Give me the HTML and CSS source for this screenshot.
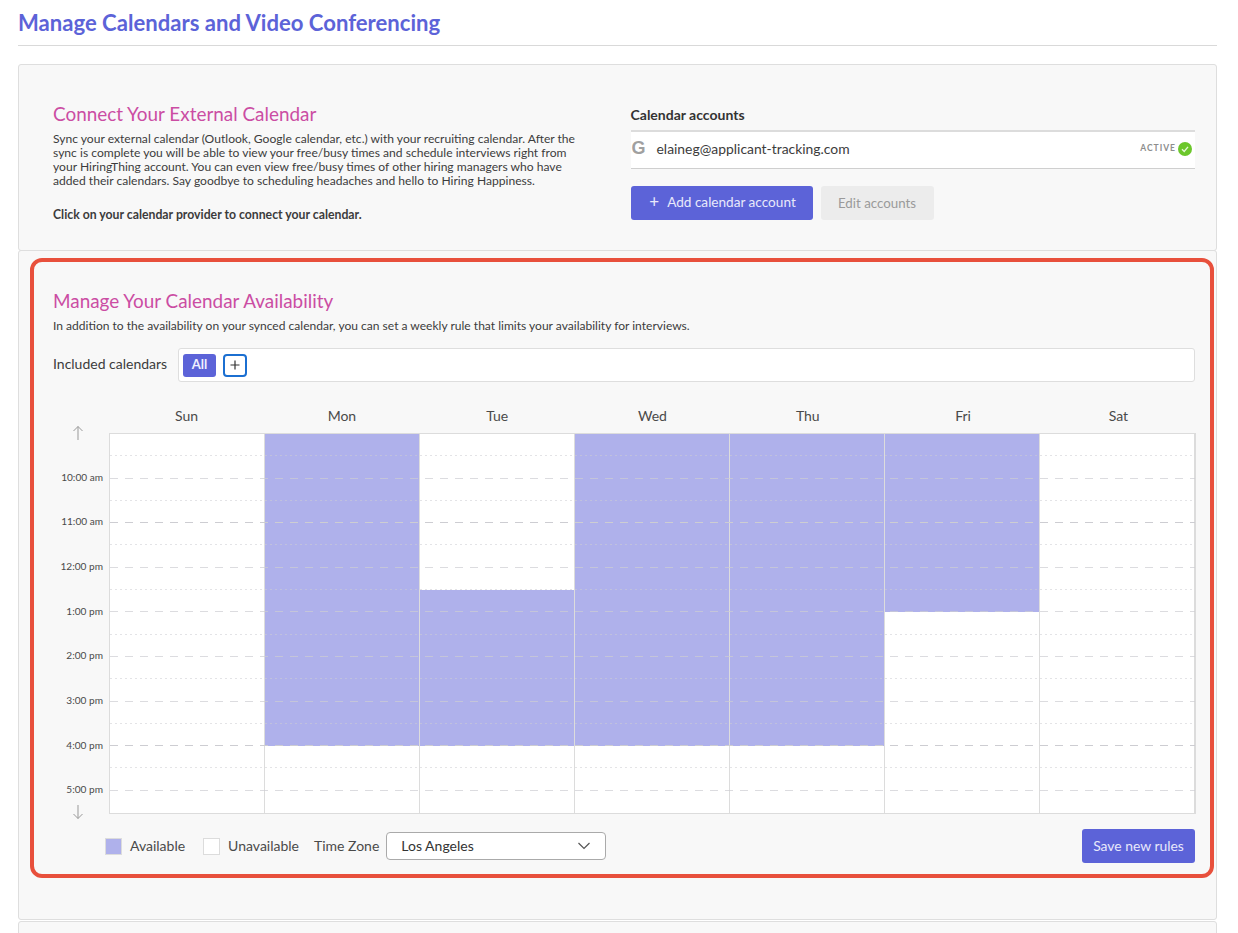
FILE: index.html
```html
<!DOCTYPE html>
<html lang="en">
<head>
<meta charset="utf-8">
<title>Manage Calendars and Video Conferencing</title>
<link rel="stylesheet" href="styles.css">
</head>
<body>
<main class="page">
  <h1 class="page-title">Manage Calendars and Video Conferencing</h1>

  <section class="card card-connect">
    <div class="connect-intro">
      <h2 class="section-title">Connect Your External Calendar</h2>
      <p class="copy">Sync your external calendar (Outlook, Google calendar, etc.) with your recruiting calendar. After the sync is complete you will be able to view your free/busy times and schedule interviews right from your HiringThing account. You can even view free/busy times of other hiring managers who have added their calendars. Say goodbye to scheduling headaches and hello to Hiring Happiness.</p>
      <p class="copy copy-strong">Click on your calendar provider to connect your calendar.</p>
    </div>
    <div class="accounts">
      <h3 class="accounts-title">Calendar accounts</h3>
      <div class="account-row">
        <span class="google-g">G</span>
        <span class="account-email">elaineg@applicant-tracking.com</span>
        <span class="status">ACTIVE</span>
        <svg class="status-icon" width="14" height="14" viewBox="0 0 14 14" aria-hidden="true"><circle cx="7" cy="7" r="7" fill="#6cc72b"/><path d="M4 7.3 6.2 9.4 10 4.9" fill="none" stroke="#e6f7d8" stroke-width="1.4"/></svg>
      </div>
      <div class="account-actions">
        <button class="btn btn-primary btn-add"><span class="btn-plus">+</span>Add calendar account</button>
        <button class="btn btn-muted">Edit accounts</button>
      </div>
    </div>
  </section>

  <section class="card card-availability">
    <h2 class="section-title">Manage Your Calendar Availability</h2>
    <p class="copy copy-one">In addition to the availability on your synced calendar, you can set a weekly rule that limits your availability for interviews.</p>

    <div class="included">
      <span class="label">Included calendars</span>
      <div class="tag-box">
        <span class="tag">All</span>
        <span class="tag-add"><svg width="12" height="12" viewBox="0 0 12 12" aria-hidden="true"><path d="M6 1.5v9M1.5 6h9" stroke="#333" stroke-width="1.2" fill="none"/></svg></span>
      </div>
    </div>

    <div class="days">
      <span>Sun</span><span>Mon</span><span>Tue</span><span>Wed</span><span>Thu</span><span>Fri</span><span>Sat</span>
    </div>

    <div class="schedule">
      <div class="axis">
        <svg class="arrow" width="12" height="16" viewBox="0 0 12 16" aria-hidden="true"><path d="M6 15V1.5M1.5 6 6 1.5 10.500 6" fill="none" stroke="#999" stroke-width="1"/></svg>
        <div class="hours">
          <span>10:00 am</span><span>11:00 am</span><span>12:00 pm</span><span>1:00 pm</span><span>2:00 pm</span><span>3:00 pm</span><span>4:00 pm</span><span>5:00 pm</span>
        </div>
        <svg class="arrow arrow-down" width="12" height="16" viewBox="0 0 12 16" aria-hidden="true"><path d="M6 1v13.500M1.500 10 6 14.500 10.500 10" fill="none" stroke="#999" stroke-width="1"/></svg>
      </div>
      <div class="grid">
        <div class="day"></div>
        <div class="day"><div class="avail" style="height:312px"></div></div>
        <div class="day"><div class="avail" style="margin-top:156px;height:156px"></div></div>
        <div class="day"><div class="avail" style="height:312px"></div></div>
        <div class="day"><div class="avail" style="height:312px"></div></div>
        <div class="day"><div class="avail" style="height:178px"></div></div>
        <div class="day"></div>
        <div class="lines">
          <i class="dot"></i><i class="dash"></i><i class="dot"></i><i class="strong"></i><i class="dot"></i><i class="dash"></i><i class="dot"></i><i class="dash"></i><i class="dot"></i><i class="dash"></i><i class="dot"></i><i class="dash"></i><i class="dot"></i><i class="strong"></i><i class="dot"></i><i class="dash"></i><i></i>
        </div>
      </div>
    </div>

    <div class="legend">
      <span class="swatch swatch-on"></span><span class="legend-text">Available</span>
      <span class="swatch swatch-off"></span><span class="legend-text">Unavailable</span>
      <span class="legend-text tz-label">Time Zone</span>
      <div class="select">
        <span>Los Angeles</span>
        <svg width="14" height="8" viewBox="0 0 14 8" aria-hidden="true"><path d="M1.500 1 7 6.500 12.500 1" fill="none" stroke="#555" stroke-width="1.200"/></svg>
      </div>
      <button class="btn btn-primary btn-save">Save new rules</button>
    </div>
  </section>

  <section class="card card-next"></section>
  <div class="highlight"></div>
</main>
</body>
</html>
```

FILE: styles.css
```css
* { box-sizing: border-box; }
html, body { margin: 0; height: 933px; overflow: hidden; background: #fff; }
body { font-family: "Lato", "Liberation Sans", sans-serif; color: #3c3c3c; }
.page { position: relative; height: 933px; padding: 0 21px 0 18px; overflow: hidden; }

.page-title {
  margin: 0 0 18px;
  height: 46px;
  padding-top: 10px;
  font-size: 22.100px;
  line-height: 26px;
  font-weight: 700;
  color: #5c63d8;
  border-bottom: 1px solid #d9d9d9;
}

.card { background: #f8f8f8; border: 1px solid #dedede; border-radius: 3px; }
.card-connect { height: 187px; display: flex; padding: 0 21px 0 34px; }
.connect-intro { width: 525px; padding-top: 37px; }
.section-title { margin: 0; font-size: 18.900px; line-height: 24px; font-weight: 400; color: #cb4da3; }
.copy { margin: 0; font-size: 12.100px; line-height: 14px; color: #3c3c3c; }
.connect-intro .copy { margin-top: 6px; }
.connect-intro .copy-strong { margin-top: 20px; font-size: 12.250px; font-weight: 700; }

.accounts { width: 565px; margin-left: 53px; padding-top: 42px; }
.accounts-title { margin: 0 0 7px; font-size: 14px; line-height: 16px; font-weight: 700; color: #333; }
.account-row {
  display: flex; align-items: center; height: 39px; padding: 0 3px 4px 1px;
  background: #fff; border-top: 2px solid #dcdcdc; border-bottom: 1px solid #cfcfcf;
}
.google-g { width: 25px; font-family: "Liberation Sans", sans-serif; font-size: 18px; font-weight: 700; color: #a0a0a0; }
.account-email { flex: 1; font-size: 13.900px; color: #3c3c3c; }
.status { font-size: 8.500px; font-weight: 700; letter-spacing: 1px; color: #8d8d8d; margin-right: 2px; }
.status-icon { margin-top: 2px; }
.account-actions { display: flex; gap: 8px; margin-top: 17px; }

.btn { border: 0; border-radius: 3px; font-family: inherit; font-size: 13.900px; height: 34px; padding: 0 0 1px; }
.btn-primary { background: #5c63d8; color: #e8e9fb; }
.btn-add { width: 182px; font-size: 13.600px; padding: 0 0 3px 2px; }
.btn-plus { font-size: 17px; font-weight: 400; margin-right: 8px; vertical-align: -1px; }
.btn-muted { width: 113px; background: #ececec; color: #9a9a9a; font-size: 13.300px; }

.card-availability { height: 670px; margin-top: -1px; padding: 38px 21px 0 34px; }
.copy-one { margin-top: 6px; font-size: 12.050px; }
.included { display: flex; align-items: center; gap: 10px; margin-top: 15px; }
.label { font-size: 14px; color: #3c3c3c; width: 115px; white-space: nowrap; padding-bottom: 3px; }
.tag-box {
  flex: 1; display: flex; align-items: center; gap: 7px; height: 34px; padding: 0 4px;
  background: #fff; border: 1px solid #dedede; border-radius: 3px;
}
.tag { width: 33px; height: 23px; background: #5c63d8; color: #f0f0ff; font-size: 13px; font-weight: 700; line-height: 21px; text-align: center; border-radius: 3px; }
.tag-add { width: 24px; height: 23px; display: flex; align-items: center; justify-content: center; background: #fff; border: 2px solid #1b6fd1; border-radius: 4px; }

.days { display: grid; grid-template-columns: repeat(7, 1fr); margin: 25px -1px 0 56px; height: 18px; font-size: 14px; line-height: 18px; text-align: center; color: #4a4a4a; }

.schedule { display: flex; margin-top: 8px; margin-right: -1px; }
.axis { flex: none; width: 56px; height: 381px; margin-top: -8px; display: flex; flex-direction: column; }
.arrow { display: block; margin-left: 19px; flex: none; }
.arrow-down { margin-top: -8px; }
.hours { flex: none; margin-top: 14px; height: 357px; display: flex; flex-direction: column; }
.hours span { flex: 1; display: flex; align-items: center; justify-content: flex-end; padding: 0 6px 1px 0; font-size: 10.100px; color: #4a4a4a; }

.grid { position: relative; flex: 1; height: 381px; display: grid; grid-template-columns: repeat(7, 1fr); background: #fff; border: 1px solid #dcdcdc; }
.day { border-right: 1px solid #dcdcdc; }
.day:last-of-type { border-right: 0; }
.avail { background: #afb1eb; }
.lines { position: absolute; inset: 0; display: flex; flex-direction: column; }
.lines i { flex: 1; display: block; background-repeat: no-repeat; background-position: left bottom; background-size: 100% 1px; }
.lines .dot { background-image: repeating-linear-gradient(90deg, rgba(205,205,210,.55) 0 2px, transparent 2px 5px); }
.lines .dash { background-image: repeating-linear-gradient(90deg, rgba(205,205,210,.7) 0 8px, transparent 8px 15px); }
.lines .strong { background-image: repeating-linear-gradient(90deg, rgba(205,205,210,1) 0 8px, transparent 8px 15px); }

.legend { display: flex; align-items: center; margin-top: 15px; height: 34px; padding-left: 52px; }
.swatch { width: 17px; height: 17px; flex: none; margin-top: 1px; border: 1px solid #dcdcdc; }
.swatch-on { background: #afb1eb; }
.swatch-off { background: #fff; margin-left: 18px; }
.legend-text { font-size: 14px; color: #4a4a4a; margin-left: 8px; padding-bottom: 1px; }
.tz-label { margin-left: 15px; }
.select {
  width: 220px; height: 28px; margin-left: 7px; display: flex; align-items: center; justify-content: space-between;
  padding: 0 14px 1px; background: #fff; border: 1px solid #aaa; border-radius: 4px; font-size: 14px; color: #333;
}
.btn-save { width: 113px; margin-left: auto; }

.card-next { height: 40px; margin-top: 1px; }
.highlight { position: absolute; left: 30px; top: 258px; width: 1184px; height: 620px; border: 4px solid #e8503c; border-radius: 12px; pointer-events: none; }
```
